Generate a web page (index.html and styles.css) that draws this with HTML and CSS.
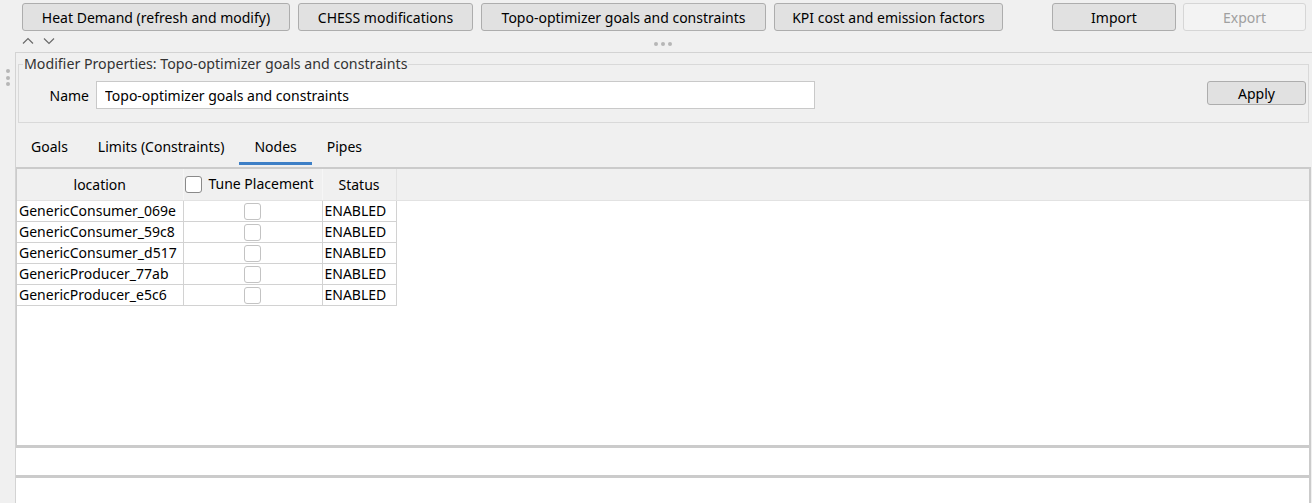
FILE: index.html
```html
<!DOCTYPE html>
<html lang="en">
<head>
<meta charset="utf-8">
<title>Topo-optimizer goals and constraints</title>
<link rel="stylesheet" href="styles.css">
</head>
<body>
<div class="toolbar">
  <button class="btn w-heat">Heat Demand (refresh and modify)</button>
  <button class="btn w-chess">CHESS modifications</button>
  <button class="btn w-topo">Topo-optimizer goals and constraints</button>
  <button class="btn w-kpi">KPI cost and emission factors</button>
  <button class="btn w-import">Import</button>
  <button class="btn w-export" disabled>Export</button>
</div>
<div class="collapse-row">
  <div class="arrows">
    <svg width="12" height="8" viewBox="0 0 12 8"><path d="M1 6.5 L6 1.5 L11 6.5" fill="none" stroke="#6a6a6a" stroke-width="1.2"/></svg>
    <svg width="12" height="8" viewBox="0 0 12 8"><path d="M1 1.5 L6 6.5 L11 1.5" fill="none" stroke="#6a6a6a" stroke-width="1.2"/></svg>
  </div>
  <div class="hdots"><span></span><span></span><span></span></div>
</div>
<div class="main">
  <div class="grip"><span></span><span></span><span></span></div>
  <div class="panel">
    <fieldset class="group">
      <legend>Modifier Properties: Topo-optimizer goals and constraints</legend>
      <div class="name-row">
        <label class="name-label" for="nm">Name</label>
        <input id="nm" class="name-input" type="text" value="Topo-optimizer goals and constraints">
        <button class="btn w-apply">Apply</button>
      </div>
    </fieldset>
    <div class="tabs">
      <div class="tab">Goals</div>
      <div class="tab">Limits (Constraints)</div>
      <div class="tab active">Nodes</div>
      <div class="tab">Pipes</div>
    </div>
    <div class="table-frame">
      <table class="grid">
        <thead>
          <tr>
            <th class="c-loc">location</th>
            <th class="c-tune"><span class="th-tune"><span class="cb cb-head"></span><span>Tune Placement</span></span></th>
            <th class="c-status">Status</th>
            <th class="c-fill"></th>
          </tr>
        </thead>
        <tbody>
          <tr><td class="c-loc">GenericConsumer_069e</td><td class="c-tune"><span class="cb"></span></td><td class="c-status">ENABLED</td><td class="c-fill"></td></tr>
          <tr><td class="c-loc">GenericConsumer_59c8</td><td class="c-tune"><span class="cb"></span></td><td class="c-status">ENABLED</td><td class="c-fill"></td></tr>
          <tr><td class="c-loc">GenericConsumer_d517</td><td class="c-tune"><span class="cb"></span></td><td class="c-status">ENABLED</td><td class="c-fill"></td></tr>
          <tr><td class="c-loc">GenericProducer_77ab</td><td class="c-tune"><span class="cb"></span></td><td class="c-status">ENABLED</td><td class="c-fill"></td></tr>
          <tr><td class="c-loc">GenericProducer_e5c6</td><td class="c-tune"><span class="cb"></span></td><td class="c-status">ENABLED</td><td class="c-fill"></td></tr>
        </tbody>
      </table>
    </div>
    <div class="field-strip"></div>
    <div class="field-box"></div>
  </div>
</div>
</body>
</html>
```

FILE: styles.css
```css
* { box-sizing: border-box; }
html, body { margin: 0; padding: 0; }
body {
  background: #f0f0f0;
  font-family: "Noto Sans", "Open Sans", "Liberation Sans", sans-serif;
  font-size: 14px;
  color: #000;
  width: 1312px;
  height: 503px;
  overflow: hidden;
}

.toolbar {
  display: flex;
  gap: 8px;
  padding: 3px 0 0 22px;
  height: 31px;
}
.btn {
  font: inherit;
  height: 28px;
  padding: 0;
  background: #e1e1e1;
  border: 1px solid #adadad;
  border-radius: 3px;
  color: #000;
  text-align: center;
}
.btn:disabled { background: #f3f3f3; border-color: #d6d6d6; color: #a0a0a0; }
.w-heat { width: 268px; }
.w-chess { width: 175px; }
.w-topo { width: 285px; }
.w-kpi { width: 229px; }
.w-import { width: 124px; margin-left: 41px; }
.w-export { width: 123px; margin-left: -1px; }
.w-apply { width: 99px; height: 24px; margin-left: auto; margin-top: -4px; }

.collapse-row {
  height: 21px;
  position: relative;
  display: flex;
  align-items: center;
  padding-left: 22px;
}
.arrows { display: flex; gap: 9px; margin-top: -1px; }
.arrows svg { display: block; }
.hdots {
  position: absolute;
  left: 654px;
  top: 11px;
  display: flex;
  gap: 3px;
}
.hdots span, .grip span {
  width: 4px; height: 4px; border-radius: 50%;
  background: #b6b6b6; display: block;
}

.main { display: flex; height: 451px; }
.grip {
  width: 15px;
  display: flex;
  flex-direction: column;
  align-items: center;
  gap: 2.5px;
  padding-top: 17px;
  padding-left: 0;
}
.panel {
  flex: 1;
  border-top: 1px solid #d3d3d3;
  border-left: 1px solid #d3d3d3;
  display: flex;
  flex-direction: column;
  min-width: 0;
}

.group {
  margin: 1px 3px 0 2px;
  padding: 7px 2px 13px 0;
  border: 1px solid #d9d9d9;
  min-width: 0;
}
.group legend {
  padding: 0 1px;
  margin-left: 4px;
  line-height: 20px;
  font-size: 14.2px;
  color: #333;
}
.name-row { display: flex; align-items: center; height: 28px; }
.name-label { width: 77px; text-align: right; padding-right: 7px; }
.name-input {
  font: inherit;
  width: 719px;
  height: 28px;
  border: 1px solid #c9c9c9;
  background: #fff;
  padding: 0 8px;
  color: #000;
}

.tabs { display: flex; padding-top: 12px; height: 44px; }
.tab {
  padding: 0 15px 4px;
  line-height: 23px;
  height: 30px;
  border-bottom: 3px solid transparent;
}
.tab.active { border-bottom-color: #3d7fc6; }

.table-frame {
  height: 281px;
  margin-right: 1px;
  background: #fff;
  border: 2px solid #cbcbcb;
  border-left-width: 1px;
  border-bottom-width: 3px;
}
.grid {
  border-collapse: collapse;
  width: 100%;
}
.grid th {
  background: #f0f0f0;
  font-weight: normal;
  height: 31px;
  padding: 0;
  text-align: center;
  vertical-align: middle;
  border-bottom: 1px solid #e2e2e2;
}
.grid th.c-loc, .grid th.c-tune { border-right: 1px solid #f6f6f6; }
.grid th.c-status { border-right: 1px solid #e2e2e2; }
.grid td {
  height: 21px;
  padding: 0 0 0 2px;
  border: 1px solid #d2d2d2;
  line-height: 19px;
  white-space: nowrap;
}
.grid td.c-loc { border-left: none; }
.grid td.c-fill { border: none; }
.c-loc { width: 166px; }
.c-tune { width: 139px; }
.c-status { width: 74px; }
.grid td.c-tune { text-align: center; padding: 0; }
.th-tune { display: flex; align-items: center; justify-content: center; gap: 6px; margin-left: -6px; line-height: 22px; }
.cb {
  display: inline-block;
  width: 17px;
  height: 17px;
  border: 1px solid #c3c3c3;
  border-radius: 3px;
  background: #fff;
  vertical-align: middle;
}
.cb-head { border-color: #8a8a8a; flex: none; }

.field-strip {
  height: 27px;
  margin-right: 1px;
  background: #fff;
  border-right: 2px solid #cbcbcb;
}
.field-box {
  flex: 1;
  margin-right: 1px;
  background: #fff;
  border-top: 3px solid #cbcbcb;
  border-right: 2px solid #cbcbcb;
}
```
